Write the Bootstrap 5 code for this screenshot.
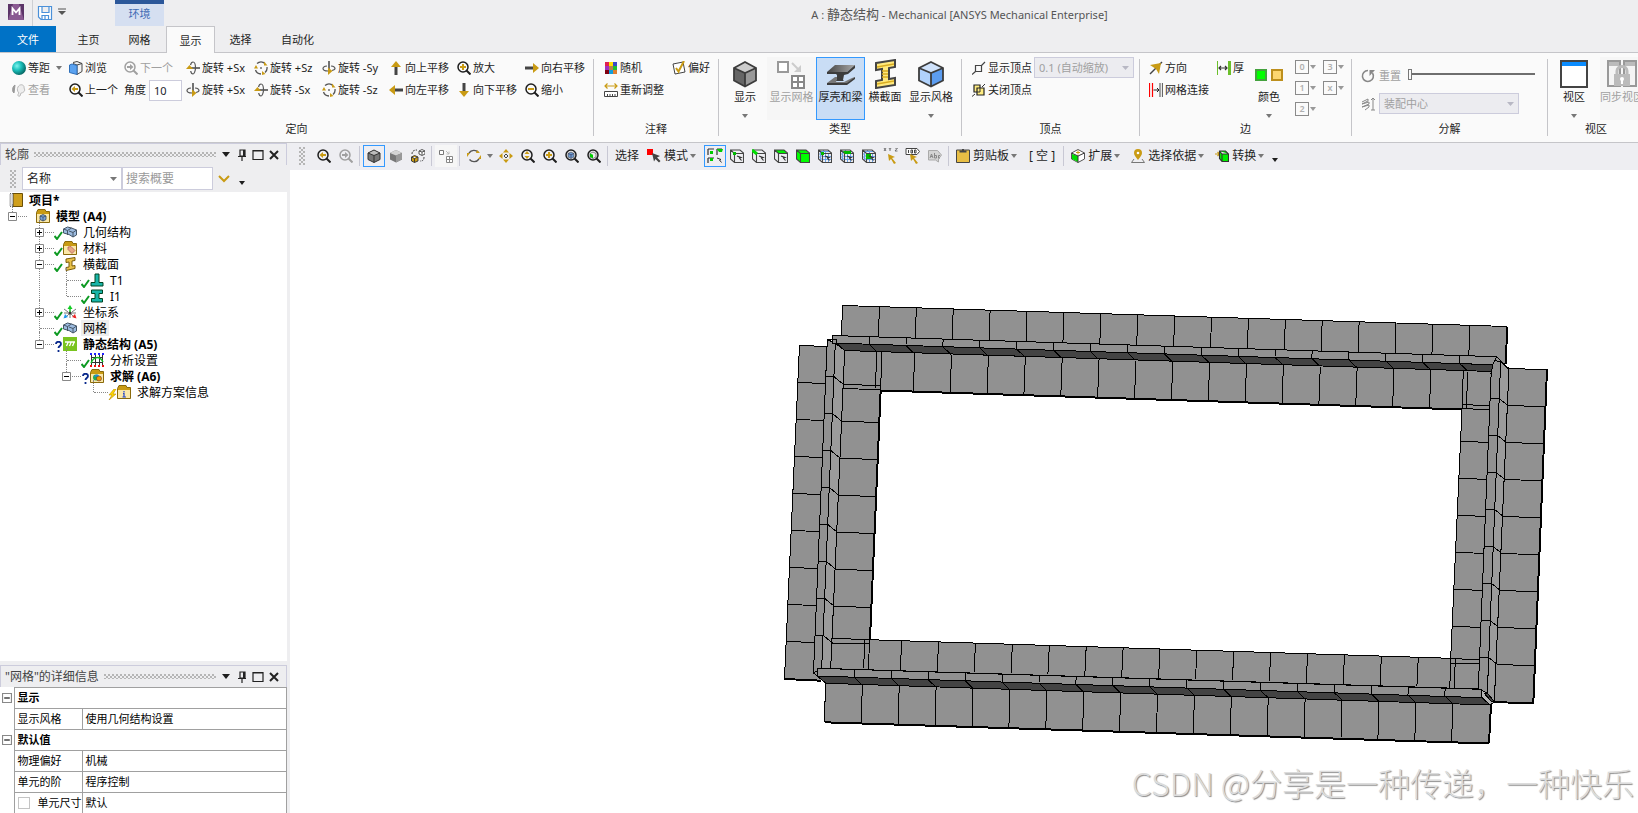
<!DOCTYPE html>
<html lang="zh-CN">
<head>
<meta charset="utf-8">
<meta name="viewport" content="width=device-width, initial-scale=1">
<title>A : 静态结构 - Mechanical [ANSYS Mechanical Enterprise]</title>
<link rel="stylesheet" href="https://cdn.jsdelivr.net/npm/bootstrap@5.3.0/dist/css/bootstrap.min.css">
<style>
:root{--chrome:#eeeef0;--strip:#eeeef2;--line:#c5c5c9;--edge:#ccccdc;--hot:#3399ff;--gold:#c99b14;--ink:#1e1e1e}
body{font-family:"Noto Sans","Noto Sans CJK SC",sans-serif;font-size:11px;line-height:16px;color:var(--ink);background:var(--chrome)}
svg{display:block;flex:none}
.i14{width:14px;height:14px}
.i16{width:16px;height:16px}
.i30{width:30px;height:30px}
.btn{--bs-btn-padding-x:0;--bs-btn-padding-y:0;--bs-btn-font-size:11px;--bs-btn-line-height:16px;--bs-btn-color:var(--ink);--bs-btn-border-radius:0;--bs-btn-border-width:0;--bs-btn-disabled-color:#a0a0a0;--bs-btn-disabled-opacity:1;--bs-btn-disabled-border-color:transparent;white-space:nowrap;text-align:left}
.caret{display:block;width:0;height:0;flex:none;border:3px solid transparent;border-top:4px solid #777;border-bottom:0}
.caret.dark{border-top-color:var(--ink)}
.caret.wide{border-width:5px 4px 0}
/* title and tabs */
.titlebar{height:26px}
.envtab{width:49px;margin-left:48px;border-top:4px solid #2b579a;background:#d5dff1;color:#3f6bb5;line-height:20px}
.caption{color:#555;white-space:nowrap;line-height:20px;padding:4px 0 0 281px}
.caption span{font-size:13px}
.tabs{height:27px;border-bottom:1px solid var(--line)}
.tabs .nav-link{height:26px;padding:0;line-height:27px;color:var(--ink);text-align:center;border:0;border-radius:0;width:51px}
.tabs .nav-link.file{width:56px;background:#0072c6;color:#fff;margin-right:7px}
.tabs .nav-link.active{width:49px;height:27px;background:#fafafa;border:1px solid var(--line);border-bottom:0;margin-left:1px}
.tabs .nav-link.wide{width:63px}
/* ribbon */
.ribbon{height:90px;background:#fafafa;border-bottom:1px solid var(--line)}
.ribbon .vr{background:var(--line);opacity:1;margin:6px 0 7px;align-self:auto;height:77px;flex:none}
.rgroup{padding-top:4px;flex:none}
.rgroup .gbody{height:63px}
.gname{font-size:11px;line-height:18px;text-align:center}
.cells{display:grid;grid-auto-rows:22px;align-content:start}
.cells .btn,.cells .fieldrow{display:flex;align-items:center;gap:2px;height:22px}
.g-orient{grid-template-columns:57px 55px 62px 68px 68px 67px 68px 68px 68px;padding-left:12px}
.g-note{grid-template-columns:68px 46px;padding-left:10px}
.g-vertex{grid-template-columns:62px 104px;padding-left:10px;padding-right:1px}
.g-edge{grid-template-columns:68px 32px;padding-left:9px}
.big{display:flex!important;flex-direction:column;align-items:center;height:63px}
.big .i30{margin-top:2px}
.big .caret{margin-top:9px}
.big.on{background:#c9ddf5;border:1px solid var(--hot)}
.big.on .i30{margin-top:1px}
.big:disabled{background:#f6f6f6}
.w40{width:40px}.w44{width:44px}.w49{width:49px}.w52{width:52px}
.angle{width:33px;height:21px;border:1px solid var(--edge);border-radius:0;padding:2px 4px;font-size:11px;line-height:16px}
.pick{appearance:none;border:1px solid var(--edge);border-radius:0;padding:0 16px 0 4px;font-size:11px;line-height:16px;height:21px;color:#a0a0a0;background-color:#ececf0;background-size:7px 4px;background-position:right 4px center;background-repeat:no-repeat;background-image:url("data:image/svg+xml,%3Csvg xmlns='http://www.w3.org/2000/svg' viewBox='0 0 7 4'%3E%3Cpath d='M0 0h7L3.500 4z' fill='%23b8b8c4'/%3E%3C/svg%3E")}
.pick:disabled{background-color:#ececf0}
.pick.name{background-color:#fff;color:var(--ink);font-size:12px;height:23px;width:100px;background-image:url("data:image/svg+xml,%3Csvg xmlns='http://www.w3.org/2000/svg' viewBox='0 0 7 4'%3E%3Cpath d='M0 0h7L3.500 4z' fill='%23777'/%3E%3C/svg%3E")}
.numgrid{display:grid;grid-template-columns:28px 28px;grid-auto-rows:21px;padding:3px 0 0 6px}
.numgrid .btn{display:flex;align-items:flex-start;gap:1px;font-size:9px}
.numgrid .digit{width:14px;height:14px;border:1px solid #8a8a8a;line-height:12px;text-align:center;font-weight:600;color:#b0b0b0}
.numgrid .caret{margin-top:5px;border-top-color:#999}
.g-explode{padding:8px 28px 0 9px}
.g-explode .exrow{display:flex;align-items:center;gap:4px;height:21px}
.g-explode .exrow+.exrow{margin-top:7px}
.g-explode .pick{width:140px}
.explode{width:127px;height:16px;appearance:none;background:none;margin:0 -16px 4px auto}
.explode::-webkit-slider-runnable-track{height:2px;background:#6e6e6e}
.explode::-webkit-slider-thumb{appearance:none;width:4px;height:11px;margin-top:-4px;border:1px solid #777;background:#fafafa;border-radius:0}
/* side panels */
.side{width:287px;flex:none}
.panehead{height:22px;border:1px solid var(--edge);border-bottom:0;padding-left:4px;font-size:12px;color:#444}
.dots,.grip{background-image:radial-gradient(circle at 1px 1px,#b4b4b4 0 .700px,transparent 1px),radial-gradient(circle at 3px 3px,#b4b4b4 0 .700px,transparent 1px);background-size:4px 4px}
.dots{height:5px;margin:0 2px 0 5px}
.panehead .btn{width:16px;height:18px;display:flex;align-items:center;justify-content:center}
.grip{width:6px;height:18px;flex:none}
.findbar{height:27px}
.find{width:91px;height:23px;border:1px solid var(--edge);border-radius:0;font-size:12px;line-height:16px;padding:2px 3px;min-height:0}
.find::placeholder{color:#9a9a9a}
.treebox{background:#fff;font-size:12px;color:#000}
.treebox ul{list-style:none;margin:0;padding:0}
.treebox ul ul ul{padding-left:27px}
.treebox ul ul li{position:relative}
.treebox ul ul li::before{content:"";position:absolute;left:12px;top:-4px;bottom:0;border-left:1px dotted #888}
.treebox ul ul li:last-child::before{bottom:auto;height:12px}
.node{display:flex;align-items:center;height:16px;white-space:nowrap}
.node .slot{width:27px;height:16px;position:relative;flex:none}
.node .slot::after{content:"";position:absolute;left:13px;right:0;top:8px;border-top:1px dotted #888}
.node .exp{position:absolute;left:8px;top:4px;width:9px;height:9px;z-index:1}
.node .state{width:9px;height:16px;flex:none;display:flex;align-items:flex-end}
.node .txt{margin-left:4px;padding:0 2px;line-height:18px;height:16px}
.node .txt.sel{background:#eee}
.props{background:#fff;color:#000;table-layout:fixed;width:100%;border-collapse:collapse;margin-bottom:-1px}
.props td,.props th{height:21px;border:1px solid #a0a0a0;padding:0 0 0 3px;line-height:18px;font-weight:400;white-space:nowrap;overflow:hidden}
.props .gut{border:0;padding:0 0 0 2px}
.props .sect{font-weight:700}
.props input{appearance:none;width:12px;height:12px;border:1px solid #c4c4c4;border-radius:0;margin:0 8px 0 0;vertical-align:-2px}
/* graphics toolbar */
.gbar{height:27px;background:var(--strip);font-size:12px;padding:0 0 2px 9px}
.gbar .btn{height:22px;min-width:22px;display:flex;align-items:center;justify-content:center;font-size:12px;flex:none}
.gbar .btn.on{border:1px solid var(--hot)}
.gbar .btn.off{background:#f6f6f6}
.gbar .vr{background:#c8c8d4;opacity:1;height:20px;align-self:center;margin:0 3px 0 2px;flex:none}
.gbar .wordy{gap:3px}
.gbar .wordy .caret{margin-left:-1px}
.gbar .apart{margin-right:11px}
.gbar .orbitmenu{margin:0 2px}
.view{background:#fff;position:relative;min-height:0}
.view>svg{width:100%;height:100%}
.wm{position:absolute;right:4px;bottom:9px;font-family:"Noto Sans CJK SC","Noto Sans",sans-serif;font-weight:300;font-size:32px;line-height:44px;color:#dcdcdc;text-shadow:1px 1px 1px #8c8c8c;white-space:nowrap}
</style>
</head>
<body class="vh-100 d-flex flex-column overflow-hidden">

<svg width="0" height="0" class="position-absolute" aria-hidden="true">
<defs>
<radialGradient id="ball" cx=".35" cy=".35" r=".7"><stop offset="0" stop-color="#7ff4ee"/><stop offset=".45" stop-color="#1cc0bb"/><stop offset="1" stop-color="#04625f"/></radialGradient>
<linearGradient id="steel" x1="0" x2="1"><stop offset="0" stop-color="#444"/><stop offset="1" stop-color="#a8a8a8"/></linearGradient>
<symbol id="s-ball" viewBox="0 0 14 14"><circle cx="7" cy="7" r="7" fill="url(#ball)"/></symbol>
<symbol id="s-browse" viewBox="0 0 14 14"><path d="M4 1.500 8 .500l5 2v8L8 13.500V4L4 2.500" fill="#f2f2f2" stroke="#444"/><path d="m8 4 5-1.500" stroke="#444"/><path d="M.500 4 3 3l5 1.500v9L.500 11.500z" fill="#5aa2f0" stroke="#2f6fb8"/></symbol>
<symbol id="s-look" viewBox="0 0 14 14"><path d="M3 2C1 3 0 6 1 9l1 1 1-8" fill="#999" stroke="#999"/><path d="M6 4c2-4 7-2 6 1 2 3-1 5-3 5l-1 3c-2 1-3-1-1-3-2-2-2-4-1-6z" fill="#eee" stroke="#bbb"/></symbol>
<symbol id="s-lens" viewBox="0 0 14 14"><circle cx="6" cy="6" r="5" fill="none" stroke="currentColor" stroke-width="1.500"/><path d="m9.500 9.500 4 4" stroke="currentColor" stroke-width="2"/></symbol>
<symbol id="s-prev" viewBox="0 0 14 14"><use href="#s-lens"/><path d="M2.500 6 6 3v2h3v2H6v2z" fill="#c99b14"/></symbol>
<symbol id="s-next" viewBox="0 0 14 14"><use href="#s-lens"/><path d="M9.500 6 6 3v2H3v2h3v2z" fill="currentColor"/></symbol>
<symbol id="s-zin" viewBox="0 0 14 14"><use href="#s-lens"/><path d="M5 3h2v2h2v2H7v2H5V7H3V5h2z" fill="#c99b14"/></symbol>
<symbol id="s-zout" viewBox="0 0 14 14"><use href="#s-lens"/><path d="M3 5h6v2H3z" fill="#c99b14"/></symbol>
<symbol id="s-zdrag" viewBox="0 0 14 14"><use href="#s-lens"/><path d="m6 2 2.500 3h-5zM6 10 3.500 7h5z" fill="#c99b14"/></symbol>
<symbol id="s-zfit" viewBox="0 0 14 14"><use href="#s-lens"/><path d="M3 4.500 6 3l3 1.500V8L6 9.500 3 8z" fill="#6d9bd2" stroke="#555" stroke-width=".7"/><path d="m3 4.500 3 1.300 3-1.300M6 5.800v3.500" stroke="#335" stroke-width=".6" fill="none"/></symbol>
<symbol id="s-zsel" viewBox="0 0 14 14"><use href="#s-lens"/><path d="M3 4.500 6 3l3 1.500V8L6 9.500 3 8z" fill="#eee" stroke="#555" stroke-width=".7"/><path d="m3 4.500 3 1.300v3.500L3 8z" fill="#0c0"/></symbol>
<symbol id="s-rx" viewBox="0 0 14 14"><path d="M5 7h9" stroke="#444" stroke-width="1.500"/><path d="M4.500 4C5 2 6 1 7 1c1.500 0 2.500 3 2.500 6S8 13 7 13s-2-1-2.300-3" fill="none" stroke="#555" stroke-width="1.200"/><path d="M0 8h7L3.500 4z" fill="#c99b14"/></symbol>
<symbol id="s-ry" viewBox="0 0 14 14"><path d="M7 0v9" stroke="#444" stroke-width="1.500"/><path d="M5 5C2 5.300 1 6.500 1 7.500 1 9 3.500 10 6 10m4-.500c2-.500 3-1 3-2C13 6 11 5.200 9 5" fill="none" stroke="#555" stroke-width="1.200"/><path d="M6 6.500V14l4.500-4z" fill="#c99b14"/></symbol>
<symbol id="s-rz" viewBox="0 0 14 14"><path d="M3 2.500a6 6 0 0 1 8 0M13 6a6 6 0 0 1-2 5.500M7 13a6 6 0 0 1-5.500-4" fill="none" stroke="#555" stroke-width="1.300"/><path d="M6.300 6.300h1.400v1.400H6.300z" fill="#333"/><path d="M0 7.500h4L2 4zM10 .500v4h3.500zM8 10v4l3.500-1z" fill="#c99b14"/></symbol>
<symbol id="s-up" viewBox="0 0 14 14"><path d="M5.500 5h3v9h-3z" fill="#444"/><path d="M7 0 2 6h10z" fill="#c99b14"/></symbol>
<symbol id="s-down" viewBox="0 0 14 14"><path d="M5.500 0h3v9h-3z" fill="#444"/><path d="m7 14 5-6H2z" fill="#c99b14"/></symbol>
<symbol id="s-left" viewBox="0 0 14 14"><path d="M5 5.500h9v3H5z" fill="#444"/><path d="m0 7 6-5v10z" fill="#c99b14"/></symbol>
<symbol id="s-right" viewBox="0 0 14 14"><path d="M0 5.500h9v3H0z" fill="#444"/><path d="M14 7 8 2v10z" fill="#c99b14"/></symbol>
<symbol id="s-rand" viewBox="0 0 14 14"><path d="M1 1h4v4H1z" fill="#e02050"/><path d="M5 1h4v4H5z" fill="#ffe000"/><path d="M9 1h4v4H9z" fill="#3a49c8"/><path d="M1 5h4v4H1z" fill="#a030c0"/><path d="M5 5h4v4H5z" fill="#b98050"/><path d="M9 5h4v4H9z" fill="#20c030"/><path d="M1 9h4v4H1z" fill="#800010"/><path d="M5 9h4v4H5z" fill="#10a0e0"/><path d="M9 9h4v4H9z" fill="#e08030"/></symbol>
<symbol id="s-scale" viewBox="0 0 14 14"><path d="M1 3h12M3.500.500 1 3l2.500 2.500M10.500.500 13 3l-2.500 2.500" stroke="#c99b14" fill="none" stroke-width="1.200"/><path d="M.500 8.500h13v5H.500zM3.500 13v-2M6 13v-2M8.500 13v-2M11 13v-2" fill="#fff" stroke="#444"/></symbol>
<symbol id="s-pref" viewBox="0 0 14 14"><path d="M1 3 11 1l2 10-10 2z" fill="#fff" stroke="#444"/><path d="m4 7 2.500 3.500L12 0" fill="none" stroke="#c99b14" stroke-width="2"/></symbol>
<symbol id="s-cube" viewBox="0 0 30 30"><path d="m15 3 11 6v12.500L15 27.500l-11-6V9z" fill="#666"/><path d="m15 3 11 6-11 5L4 9z" fill="#ccc"/><path d="m15 14 11-5v12.500l-11 6z" fill="#999"/><path d="m15 3 11 6v12.500L15 27.500l-11-6V9zM4 9l11 5 11-5M15 14v13.500" fill="none" stroke="#3c3c3c" stroke-width="1.800"/></symbol>
<symbol id="s-cubeb" viewBox="0 0 30 30"><path d="m15 3 12 6v12.500L15 27.500l-12-6V9z" fill="#b0d2fc"/><path d="m15 3 12 6-12 5L3 9z" fill="#cfe2fb"/><path d="m15 14 12-5v12.500l-12 6z" fill="#5c9df0"/><path d="m15 3 12 6v12.500L15 27.500l-12-6V9zM3 9l12 5 12-5M15 14v13.500" fill="none" stroke="#3c3c3c" stroke-width="1.800"/></symbol>
<symbol id="s-mesh" viewBox="0 0 30 30"><path d="M1 3h10v10H1z" fill="#fff" stroke="#999" stroke-width="2"/><path d="m15 4 6 6" stroke="#ccc" stroke-width="2"/><path d="M24 13V6l-7 7z" fill="#ccc"/><path d="M15 17h12v12H15zM21 17v12M15 23h12" fill="#fff" stroke="#888" stroke-width="2"/></symbol>
<symbol id="s-beam" viewBox="0 0 30 30"><path d="m1 13 8-7h20l-8 7z" fill="url(#steel)"/><path d="M1 13h20l8-7v3l-7 6-4 1-1 5 1 1H9l2-2V16l-1-1H1z" fill="#3d3d3d"/><path d="m1 24 8-6h2v2l-1 3h8l8-4 3-1-8 7z" fill="#777"/><path d="M1 24h20l8-6v2l-8 6H1z" fill="#3d3d3d"/></symbol>
<symbol id="s-ibeam" viewBox="0 0 30 30"><path d="m6 4 19-3v7l-6 1v11l6-1v7l-19 3v-7l6-1V10l-6 1z" fill="#ffe97d" stroke="#444" stroke-width="2"/><path d="m7 8 17-3M12 12h6M12 15h6M12 18h6M7 25l17-3" stroke="#d9ac20" stroke-width="1.500" fill="none"/></symbol>
<symbol id="s-vshow" viewBox="0 0 14 14"><path d="M3.500 4.500h6v6h-6zM0 13.500l3.500-3M9.500 4.500 13 1" fill="none" stroke="#444" stroke-width="1.200"/></symbol>
<symbol id="s-vhide" viewBox="0 0 14 14"><path d="M2 2h6v7H2z" fill="#ffec80" stroke="#222" stroke-width="1.200"/><path d="M5 5h7v7H5z" fill="#ffec80" stroke="#222" stroke-width="1.200"/><path d="M8 5v4H5M0 13.500 3 11M10 4l3-3" fill="none" stroke="#333"/></symbol>
<symbol id="s-dir" viewBox="0 0 14 14"><path d="m1 13 12-12" stroke="#444" stroke-width="1.500"/><path d="M1 4 12 2l-2 11-3-5z" fill="#c99b14"/></symbol>
<symbol id="s-conn" viewBox="0 0 14 14"><path d="M.500 0v14M3.500 0v14" stroke="#f00" stroke-width="1.200"/><path d="M11 0v14M13.500 0v14" stroke="#666" stroke-width="1.200"/><path d="M4.500 7H10M8 5l2 2-2 2" fill="none" stroke="#222"/></symbol>
<symbol id="s-thick" viewBox="0 0 14 14"><path d="M.500 0v14" stroke="#6bbf2a"/><path d="M12.500 0v14" stroke="#6bbf2a" stroke-width="3"/><path d="M2 7h8M4 5 2 7l2 2M8 5l2 2-2 2" fill="none" stroke="#333" stroke-width="1.200"/></symbol>
<symbol id="s-color" viewBox="0 0 30 30"><path d="M2 11h10v10H2z" fill="#0f0" stroke="#44a23e" stroke-width="2"/><path d="M18 11h10v10H18z" fill="#fcd670" stroke="#bd8f1c" stroke-width="2"/></symbol>
<symbol id="s-reset" viewBox="0 0 14 14"><path d="M7 1.500A5.500 5.500 0 1 0 11.500 4" fill="none" stroke="#888" stroke-width="1.600"/><path d="M8.500 1H14L8.500 7z" fill="#888"/></symbol>
<symbol id="s-coil" viewBox="0 0 14 14"><path d="m1 5 6-3v2L1 7l7-2v2l-7 3 7-2v2l-4 3M12 1v12M10 3l2-2 2 2M10 13h4" fill="none" stroke="#888"/></symbol>
<symbol id="s-win" viewBox="0 0 30 30"><path d="M2 2h26v26H2z" fill="#fff" stroke="#444" stroke-width="2"/><path d="M3 3h24v4H3z" fill="#0a8cff"/></symbol>
<symbol id="s-lock" viewBox="0 0 30 30"><path d="M1 2h12v25H1zM17 2h12v25H17z" fill="#f4f4f4" stroke="#999" stroke-width="2"/><path d="M2 3h10v4H2zM18 3h10v4H18z" fill="#bbb"/><path d="M10 16v-4c0-6 10-6 10 0v4" fill="none" stroke="#bbb" stroke-width="3"/><path d="M7 15h16v12H7z" fill="#bbb"/><circle cx="15" cy="20" r="2" fill="#fff"/><path d="M14 20h2v5h-2z" fill="#fff"/></symbol>
<symbol id="s-cubes" viewBox="0 0 14 14"><path d="m7 1 6 3v6.500L7 13.500l-6-3V4z" fill="#777"/><path d="m7 1 6 3-6 2.500L1 4z" fill="#bbb"/><path d="m7 1 6 3v6.500L7 13.500l-6-3V4zM1 4l6 2.500L13 4M7 6.500v7" fill="none" stroke="#333"/></symbol>
<symbol id="s-cubep" viewBox="0 0 14 14"><path d="m7 1 6 3v6.500L7 13.500l-6-3V4z" fill="#777"/><path d="m7 1 6 3-6 2.500L1 4z" fill="#d4d4d4"/><path d="m7 6.500 6-2.500v6.500l-6 3z" fill="#999"/></symbol>
<symbol id="s-swap" viewBox="0 0 14 14"><path d="m8 2 3-1.500 3 1.500v3l-3 1.500L8 5zM8 2l3 1 3-1M11 3v3" fill="#fff" stroke="#444" stroke-width=".9"/><path d="m.500 8 3-1.500L7 8v4l-3.500 1.500-3-1.500zM.500 8l3 1.500L7 8M3.500 9.500v4" fill="#c99b14" stroke="#333" stroke-width=".9"/><path d="M1 5c0-3 2-4 5-4M13 8c0 3-1 4-4 4" fill="none" stroke="#444" stroke-dasharray="2 1"/></symbol>
<symbol id="s-meshs" viewBox="0 0 14 14"><path d="M.500 1.500h4v4h-4z" fill="#fff" stroke="#777"/><path d="m7 2 3 3M7.500 5H10V2.500" stroke="#bbb" fill="none"/><path d="M7.500 7.500h6v6h-6zM10.500 7.500v6M7.500 10.500h6" fill="#fff" stroke="#888"/></symbol>
<symbol id="s-orbit" viewBox="0 0 14 14"><path d="M2 4a6 6 0 0 1 9.500-.500M12 10a6 6 0 0 1-9.500.500" fill="none" stroke="#555" stroke-width="1.400"/><path d="M0 8V4h3zM14 6v4h-3zM10 1l3 3h-4z" fill="#c99b14"/></symbol>
<symbol id="s-pan" viewBox="0 0 14 14"><path d="m7 0 3 3.500H4zM7 14l3-3.500H4zM0 7l3.500-3v6zM14 7l-3.500-3v6z" fill="#c99b14"/><path d="M6 5h2v1H6zM6 8h2v1H6zM5 6h1v2H5zM8 6h1v2H8z" fill="#444"/></symbol>
<symbol id="s-arrow" viewBox="0 0 14 14"><path d="M0 0h6v6H0z" fill="red"/><path d="m5 4 8 3-3 1.500L13.500 12 12 13.500 8.500 10 7 12.500z" fill="#444"/></symbol>
<symbol id="s-f4" viewBox="0 0 16 16"><path d="M1 1h6M1 1v6M10 1h5M10 1v6M1 10h6M1 10v5" stroke="#333" stroke-width="1.200" fill="none"/><path d="M3 3h3v3H3zM10 1h6l-1 3h-3zM3 10h3v3H3z" fill="#0c0"/><path d="m10 10 4 1.500-1.500.500 2 2.500" stroke="#333" fill="none"/></symbol>
<symbol id="s-box" viewBox="0 0 14 14"><path d="m.500 1 9.500 0 3.500 3v9.500h-9L.500 10zM.500 1l4 3.500h9M4.500 4.500v9" fill="none" stroke="#444" stroke-width="1.100"/></symbol>
<symbol id="s-cur" viewBox="0 0 14 14"><path d="m7 7 4 1.500-1.500.500 2 2.500" stroke="#333" stroke-width="1.200" fill="none"/></symbol>
<symbol id="s-bv" viewBox="0 0 14 14"><use href="#s-box"/><use href="#s-cur"/><path d="M3 3h3v3H3z" fill="#0b0"/></symbol>
<symbol id="s-be" viewBox="0 0 14 14"><use href="#s-box"/><use href="#s-cur"/><path d="m0 1 5 4" stroke="#0d0" stroke-width="3"/></symbol>
<symbol id="s-bf" viewBox="0 0 14 14"><path d="M.500 1H10l3.500 3.500h-9z" fill="#0e0"/><use href="#s-box"/><use href="#s-cur"/></symbol>
<symbol id="s-bb" viewBox="0 0 14 14"><path d="M.500 1H10l3.500 3.500v9h-9L.500 10z" fill="#0f0"/><use href="#s-box"/></symbol>
<symbol id="s-grid" viewBox="0 0 14 14"><path d="M7.500 4v9M10.500 4v9M4 7.500h9M4 10.500h9M2.500 3v8M.500 4l4 4M.500 7l4 4M5 1l3 3M3 2.500h8" stroke="#5d9be8" fill="none" stroke-width=".9"/><use href="#s-box"/></symbol>
<symbol id="s-gn" viewBox="0 0 14 14"><use href="#s-grid"/><path d="M3 3h3v3H3z" fill="#0b0"/><use href="#s-cur"/></symbol>
<symbol id="s-gf" viewBox="0 0 14 14"><use href="#s-grid"/><path d="M3 2h8v3H5z" fill="#0b0"/><use href="#s-cur"/></symbol>
<symbol id="s-ge" viewBox="0 0 14 14"><use href="#s-grid"/><path d="M4 5h5v5H4z" fill="#0b0"/><use href="#s-cur"/></symbol>
<symbol id="s-gold" viewBox="0 0 16 16"><path d="m5 6 7 3-3 1 4 5-2 1-3-5-2 2z" fill="#c99b14"/></symbol>
<symbol id="s-xyz" viewBox="0 0 16 16"><path d="m1 0 2 3m0-3L1 3M6 0l1 1.500L8 0M7 1.500V3M12 0h2.500L12 3h2.500" stroke="#555" stroke-width=".8" fill="none"/><use href="#s-gold"/></symbol>
<symbol id="s-100" viewBox="0 0 16 16"><path d="M1 .500h11l2.500 3-2.500 3H1z" fill="#fff" stroke="#444"/><path d="M3.500 2v3M6 2h1.500v3H6zM9.500 2H11v3H9.500z" fill="none" stroke="#444"/><use href="#s-gold"/></symbol>
<symbol id="s-abc" viewBox="0 0 14 14"><path d="M.500 1.500h9l4 4.500-3 4v3l-3-2h-7z" fill="#d4d4d4" stroke="#aaa"/><path d="m2 9 1.500-4L5 9M2.500 7.500h2M6.500 4v5h2V6.500h-2M12 6.500h-1.500V9H12" fill="none" stroke="#888"/></symbol>
<symbol id="s-clip" viewBox="0 0 14 14"><path d="M.500 1h13v12.500H.500z" fill="#e8be45" stroke="#444"/><path d="M6 0h2v1.500h2.500v2h-7v-2H6z" fill="#444"/></symbol>
<symbol id="s-ext" viewBox="0 0 14 14"><path d="m7 .500 6.500 3.500v6L7 13.500.500 10V4z" fill="#fff" stroke="#555"/><path d="m1 5 6 2v6L1 10z" fill="#0d0"/><path d="m.500 4 6.500 3 6.500-3M7 7v6.500" stroke="#333" fill="none"/><path d="M7 1.500v4M5 3.500h4" stroke="#c99b14"/></symbol>
<symbol id="s-pin" viewBox="0 0 14 14"><path d="M3 10 .500 13.500h13L11 10" fill="none" stroke="#777"/><path d="M7 11C4.500 7.500 3 6 3 4a4 4 0 0 1 8 0c0 2-1.500 3.500-4 7z" fill="#c99b14"/><circle cx="7" cy="4" r="1.300" fill="#fff"/></symbol>
<symbol id="s-conv" viewBox="0 0 14 14"><path d="M0 5h4M2.500 3l2 2-2 2" stroke="#c99b14" fill="none" stroke-width="1.200"/><path d="M4.500 2h6l3 3v7.500H7l-2.500-3zM4.500 2 7 5h6.500M7 5v7" fill="#0e0" stroke="#333" stroke-width="1.100"/></symbol>
<symbol id="s-tack" viewBox="0 0 12 12"><path d="M4 1h5v6H4zM2 7.500h8M6 8v4" fill="none" stroke="#222" stroke-width="1.200"/><path d="M7 1h2v6H7z" fill="#222"/></symbol>
<symbol id="s-max" viewBox="0 0 12 12"><path d="M1 1.500h10v9H1zM1 2h10" fill="none" stroke="#222" stroke-width="1.200"/></symbol>
<symbol id="s-x" viewBox="0 0 12 12"><path d="m2 2 8 8m0-8-8 8" stroke="#222" stroke-width="2"/></symbol>
<symbol id="s-ok" viewBox="0 0 9 9"><path d="m.500 5 2.500 3 5-7" fill="none" stroke="#0d9a22" stroke-width="2"/></symbol>
<symbol id="s-bolt" viewBox="0 0 9 11"><path d="M6 0 1 6h3L1 11l7-6H5l3-5z" fill="#ffd800" stroke="#b98a00" stroke-width=".6"/></symbol>
<symbol id="s-minus" viewBox="0 0 9 9"><path d="M.500.500h8v8h-8z" fill="#fff" stroke="#888"/><path d="M2 4.500h5" stroke="#000"/></symbol>
<symbol id="s-plus" viewBox="0 0 9 9"><path d="M.500.500h8v8h-8z" fill="#fff" stroke="#888"/><path d="M2 4.500h5M4.500 2v5" stroke="#000"/></symbol>
<symbol id="s-book" viewBox="0 0 14 14"><path d="M4 .500h9.500v13H4z" fill="#cf9f1c" stroke="#6b4f06"/><path d="M1 .500h3v13H1z" fill="#ddd" stroke="#666" stroke-dasharray="1 1"/></symbol>
<symbol id="s-fold" viewBox="0 0 14 14"><path d="M.500 3.500 2 .500h7l1 2h3.500v11H.500z" fill="#c99b14" stroke="#8a6a0c"/><path d="M1 5h12v8H1z" fill="#fbe8a8"/></symbol>
<symbol id="s-model" viewBox="0 0 14 14"><use href="#s-fold"/><path d="m4 7 3-1.500L10 7v3.500L7 12l-3-1.500z" fill="#7ba5dd" stroke="#345" stroke-width=".8"/><path d="m4 7 3 1.200L10 7M7 8.200V12" stroke="#345" stroke-width=".7" fill="none"/></symbol>
<symbol id="s-geo" viewBox="0 0 14 14"><path d="m.500 4 4-2 4 1 5 2v5l-3.500 2-4-2.500L.500 8z" fill="#9cbbe0" stroke="#456" /><path d="m.500 4 4 1.500 4-2.500M4.500 5.500V10M6 6l4 1.500L13.500 5M10 7.500V12" fill="none" stroke="#456"/></symbol>
<symbol id="s-mat" viewBox="0 0 14 14"><use href="#s-fold"/><path d="m5 6 3-.500 4 4-3 3-4-4z" fill="#e7a884" stroke="#a55" stroke-width=".7"/></symbol>
<symbol id="s-sec" viewBox="0 0 14 14"><path d="m3 2 9-1.500v3l-3 .500v5l3-.500v3L3 13.500v-3L6 10V5l-3 .500z" fill="#e9c24a" stroke="#7a5b08"/></symbol>
<symbol id="s-t1" viewBox="0 0 14 14"><path d="M5 1h4v8.500h4v3.500H1V9.500h4z" fill="#18b5a9" stroke="#042" /></symbol>
<symbol id="s-i1" viewBox="0 0 14 14"><path d="M1.500 1h11v3.500H9v5h3.500V13h-11V9.500H5v-5H1.500z" fill="#18b5a9" stroke="#042"/></symbol>
<symbol id="s-cs" viewBox="0 0 14 14"><path d="m7 8-5 5M7 8l5 5" stroke="#888"/><path d="M7 0 4.500 4h5z" fill="#1c2"/><path d="M7 4v3" stroke="#1c2" stroke-width="1.500"/><path d="M13.500 13.500 12 9l-3 3z" fill="#e22"/><path d="M.500 13.500 2 9l3 3z" fill="#29e"/><path d="m1 4 4 3M13 4 9 7M7 9v4M1 8h12" stroke="#777"/><circle cx="7" cy="8" r="1.500" fill="#333"/></symbol>
<symbol id="s-static" viewBox="0 0 14 14"><path d="M0 0h14v14H0z" fill="#79c41f"/><path d="M2 5h10M5 5.500 3.500 9M8 5.500 6.500 9M11 5.500 9.500 9" stroke="#fff" stroke-width="1.300"/></symbol>
<symbol id="s-set" viewBox="0 0 14 14"><path d="M1.500 2v11M5.500 2v11M9.500 2v11M12.500 2v11M1 9.500h12M1 4.500h12" stroke="#333"/><path d="M0 1h2M4 1h2M8 1h2M12 1h2" stroke="#22f" stroke-width="2"/><path d="M0 13h2M4 13h2M8 13h2M12 13h2" stroke="#e11" stroke-width="2"/><path d="M1 10C4 3 10 3 13 9" fill="none" stroke="#1b2" stroke-width="1.500"/></symbol>
<symbol id="s-sol" viewBox="0 0 14 14"><use href="#s-fold"/><circle cx="6" cy="8.500" r="3" fill="#2a5"/><circle cx="9" cy="9.500" r="2.500" fill="#e90" stroke="#633" stroke-width=".6"/><path d="M4 8c1-3 4-3 5-1z" fill="#28d"/></symbol>
<symbol id="s-info" viewBox="0 0 14 14"><use href="#s-fold"/><path d="M7 6v1.500M6 8.500h1V12M5.500 12h3.500" stroke="#24c" fill="none" stroke-width="1.200"/></symbol>
</defs>
</svg>

<header class="titlebar d-flex position-relative flex-shrink-0">
  <svg class="i16 mt-1 ms-2 flex-shrink-0" viewBox="0 0 16 16" aria-label="M"><path d="M0 0h16v16H0z" fill="#5b3468"/><path d="m0 16 5-16h6l5 16z" fill="#8a5a92"/><path d="M4.500 11V4.500L8 8.500l3.500-4V11" fill="none" stroke="#fff" stroke-width="1.800"/></svg>
  <div class="vr ms-2 bg-secondary opacity-25"></div>
  <button class="btn ms-1" aria-label="保存"><svg class="i16" viewBox="0 0 16 16"><path d="M1.500 1.500h13v13H4L1.500 12zM5 1.500v6h7v-6M5 14.500v-4h6.500v4M8 11v3" fill="#fff" stroke="#4a90d9" stroke-width="1.200"/></svg></button>
  <button class="btn ms-1" aria-label="自定义工具栏"><svg width="10" height="12" viewBox="0 0 10 12"><path d="M1 2h8" stroke="#555"/><path d="M1 4h8L5 8z" fill="#555"/></svg></button>
  <div class="envtab text-center">环境</div>
  <div class="caption position-absolute top-0 start-0 w-100 text-center pe-none">A : <span>静态结构</span> - Mechanical [ANSYS Mechanical Enterprise]</div>
</header>

<nav class="tabs nav flex-nowrap flex-shrink-0">
  <a class="nav-link file" href="#">文件</a>
  <a class="nav-link" href="#">主页</a>
  <a class="nav-link" href="#">网格</a>
  <a class="nav-link active" href="#">显示</a>
  <a class="nav-link" href="#">选择</a>
  <a class="nav-link wide" href="#">自动化</a>
</nav>

<section class="ribbon d-flex flex-shrink-0 overflow-hidden">
  <div class="rgroup">
    <div class="gbody cells g-orient">
      <button class="btn"><svg class="i14"><use href="#s-ball"/></svg>等距<span class="caret ms-1"></span></button>
      <button class="btn"><svg class="i14"><use href="#s-browse"/></svg>浏览</button>
      <button class="btn" disabled><svg class="i14"><use href="#s-next"/></svg>下一个</button>
      <button class="btn"><svg class="i14"><use href="#s-rx"/></svg>旋转 +Sx</button>
      <button class="btn"><svg class="i14"><use href="#s-rz"/></svg>旋转 +Sz</button>
      <button class="btn"><svg class="i14"><use href="#s-ry"/></svg>旋转 -Sy</button>
      <button class="btn"><svg class="i14"><use href="#s-up"/></svg>向上平移</button>
      <button class="btn"><svg class="i14"><use href="#s-zin"/></svg>放大</button>
      <button class="btn"><svg class="i14"><use href="#s-right"/></svg>向右平移</button>
      <button class="btn" disabled><svg class="i14"><use href="#s-look"/></svg>查看</button>
      <button class="btn"><svg class="i14"><use href="#s-prev"/></svg>上一个</button>
      <div class="fieldrow"><label for="angle">角度</label><input id="angle" class="form-control angle ms-auto me-1" value="10"></div>
      <button class="btn"><svg class="i14"><use href="#s-ry"/></svg>旋转 +Sx</button>
      <button class="btn"><svg class="i14"><use href="#s-rx"/></svg>旋转 -Sx</button>
      <button class="btn"><svg class="i14"><use href="#s-rz"/></svg>旋转 -Sz</button>
      <button class="btn"><svg class="i14"><use href="#s-left"/></svg>向左平移</button>
      <button class="btn"><svg class="i14"><use href="#s-down"/></svg>向下平移</button>
      <button class="btn"><svg class="i14"><use href="#s-zout"/></svg>缩小</button>
    </div>
    <div class="gname">定向</div>
  </div>
  <div class="vr"></div>
  <div class="rgroup">
    <div class="gbody cells g-note">
      <button class="btn"><svg class="i14"><use href="#s-rand"/></svg>随机</button>
      <button class="btn"><svg class="i14"><use href="#s-pref"/></svg>偏好</button>
      <button class="btn"><svg class="i14"><use href="#s-scale"/></svg>重新调整</button>
    </div>
    <div class="gname">注释</div>
  </div>
  <div class="vr"></div>
  <div class="rgroup">
    <div class="gbody d-flex ps-1 pe-1">
      <button class="btn big w44"><svg class="i30"><use href="#s-cube"/></svg>显示<span class="caret"></span></button>
      <button class="btn big w49" disabled><svg class="i30"><use href="#s-mesh"/></svg>显示网格</button>
      <button class="btn big w49 on"><svg class="i30"><use href="#s-beam"/></svg>厚壳和梁</button>
      <button class="btn big w40"><svg class="i30"><use href="#s-ibeam"/></svg>横截面</button>
      <button class="btn big w52"><svg class="i30"><use href="#s-cubeb"/></svg>显示风格<span class="caret"></span></button>
    </div>
    <div class="gname">类型</div>
  </div>
  <div class="vr"></div>
  <div class="rgroup">
    <div class="gbody cells g-vertex">
      <button class="btn"><svg class="i14"><use href="#s-vshow"/></svg>显示顶点</button>
      <select class="pick me-1" disabled aria-label="顶点大小"><option>0.1 (自动缩放)</option></select>
      <button class="btn"><svg class="i14"><use href="#s-vhide"/></svg>关闭顶点</button>
    </div>
    <div class="gname">顶点</div>
  </div>
  <div class="vr"></div>
  <div class="rgroup">
    <div class="gbody d-flex">
      <div class="cells g-edge">
        <button class="btn"><svg class="i14"><use href="#s-dir"/></svg>方向</button>
        <button class="btn"><svg class="i14"><use href="#s-thick"/></svg>厚</button>
        <button class="btn"><svg class="i14"><use href="#s-conn"/></svg>网格连接</button>
      </div>
      <button class="btn big w40"><svg class="i30"><use href="#s-color"/></svg>颜色<span class="caret"></span></button>
      <div class="numgrid">
        <button class="btn" disabled><span class="digit">0</span><span class="caret"></span></button>
        <button class="btn" disabled><span class="digit">3</span><span class="caret"></span></button>
        <button class="btn" disabled><span class="digit">1</span><span class="caret"></span></button>
        <button class="btn" disabled><span class="digit">x</span><span class="caret"></span></button>
        <button class="btn" disabled><span class="digit">2</span><span class="caret"></span></button>
      </div>
    </div>
    <div class="gname">边</div>
  </div>
  <div class="vr"></div>
  <div class="rgroup">
    <div class="gbody g-explode">
      <div class="exrow">
        <button class="btn d-flex align-items-center" disabled><svg class="i14 me-1"><use href="#s-reset"/></svg>重置</button>
        <input type="range" class="explode" value="0" aria-label="分解距离">
      </div>
      <div class="exrow">
        <svg class="i14"><use href="#s-coil"/></svg>
        <select class="pick" disabled aria-label="分解中心"><option>装配中心</option></select>
      </div>
    </div>
    <div class="gname">分解</div>
  </div>
  <div class="vr"></div>
  <div class="rgroup">
    <div class="gbody d-flex">
      <button class="btn big w52"><svg class="i30"><use href="#s-win"/></svg>视区<span class="caret"></span></button>
      <button class="btn big w44" disabled><svg class="i30"><use href="#s-lock"/></svg>同步视区</button>
    </div>
    <div class="gname">视区</div>
  </div>
</section>

<main class="d-flex flex-grow-1" style="min-height:0">
  <aside class="side d-flex flex-column">
    <div class="panehead d-flex align-items-center flex-shrink-0">轮廓<div class="dots flex-grow-1"></div>
      <button class="btn" aria-label="菜单"><span class="caret dark wide"></span></button>
      <button class="btn" aria-label="固定"><svg width="12" height="12"><use href="#s-tack"/></svg></button>
      <button class="btn" aria-label="最大化"><svg width="12" height="12"><use href="#s-max"/></svg></button>
      <button class="btn me-1" aria-label="关闭"><svg width="12" height="12"><use href="#s-x"/></svg></button>
    </div>
    <div class="findbar d-flex align-items-center flex-shrink-0">
      <div class="grip" style="margin:0 6px 0 10px"></div>
      <select class="pick name" aria-label="筛选字段"><option>名称</option></select>
      <input class="form-control find" placeholder="搜索概要" aria-label="搜索概要">
      <button class="btn ms-1" aria-label="展开"><svg width="14" height="14" viewBox="0 0 14 14"><path d="m2 4 5 5 5-5" fill="none" stroke="#c99b14" stroke-width="2"/></svg></button>
      <span class="caret dark ms-2 mt-2"></span>
    </div>
    <div class="treebox flex-grow-1 overflow-hidden">
      <ul>
        <li><div class="node fw-bold"><span class="state"></span><svg class="i14"><use href="#s-book"/></svg><span class="txt">项目*</span></div>
          <ul><li><div class="node fw-bold"><span class="slot"><svg class="exp"><use href="#s-minus"/></svg></span><span class="state"></span><svg class="i14"><use href="#s-model"/></svg><span class="txt">模型 (A4)</span></div>
            <ul>
              <li><div class="node"><span class="slot"><svg class="exp"><use href="#s-plus"/></svg></span><span class="state"><svg width="9" height="9"><use href="#s-ok"/></svg></span><svg class="i14"><use href="#s-geo"/></svg><span class="txt">几何结构</span></div></li>
              <li><div class="node"><span class="slot"><svg class="exp"><use href="#s-plus"/></svg></span><span class="state"><svg width="9" height="9"><use href="#s-ok"/></svg></span><svg class="i14"><use href="#s-mat"/></svg><span class="txt">材料</span></div></li>
              <li><div class="node"><span class="slot"><svg class="exp"><use href="#s-minus"/></svg></span><span class="state"><svg width="9" height="9"><use href="#s-ok"/></svg></span><svg class="i14"><use href="#s-sec"/></svg><span class="txt">横截面</span></div>
                <ul>
                  <li><div class="node"><span class="slot"></span><span class="state"><svg width="9" height="9"><use href="#s-ok"/></svg></span><svg class="i14"><use href="#s-t1"/></svg><span class="txt">T1</span></div></li>
                  <li><div class="node"><span class="slot"></span><span class="state"><svg width="9" height="9"><use href="#s-ok"/></svg></span><svg class="i14"><use href="#s-i1"/></svg><span class="txt">I1</span></div></li>
                </ul></li>
              <li><div class="node"><span class="slot"><svg class="exp"><use href="#s-plus"/></svg></span><span class="state"><svg width="9" height="9"><use href="#s-ok"/></svg></span><svg class="i14"><use href="#s-cs"/></svg><span class="txt">坐标系</span></div></li>
              <li><div class="node"><span class="slot"></span><span class="state"><svg width="9" height="9"><use href="#s-ok"/></svg></span><svg class="i14"><use href="#s-geo"/></svg><span class="txt sel">网格</span></div></li>
              <li><div class="node fw-bold"><span class="slot"><svg class="exp"><use href="#s-minus"/></svg></span><span class="state"><svg width="9" height="11" viewBox="0 0 9 11"><path d="M2 3c0-3 5-3 5 0 0 2-2.500 2-2.500 4M4.500 9v2" fill="none" stroke="#0a2a8c" stroke-width="1.800"/></svg></span><svg class="i14"><use href="#s-static"/></svg><span class="txt">静态结构 (A5)</span></div>
                <ul>
                  <li><div class="node"><span class="slot"></span><span class="state"><svg width="9" height="9"><use href="#s-ok"/></svg></span><svg class="i14"><use href="#s-set"/></svg><span class="txt">分析设置</span></div></li>
                  <li><div class="node fw-bold"><span class="slot"><svg class="exp"><use href="#s-minus"/></svg></span><span class="state"><svg width="9" height="11" viewBox="0 0 9 11"><path d="M2 3c0-3 5-3 5 0 0 2-2.500 2-2.500 4M4.500 9v2" fill="none" stroke="#0a2a8c" stroke-width="1.800"/></svg></span><svg class="i14"><use href="#s-sol"/></svg><span class="txt">求解 (A6)</span></div>
                    <ul><li><div class="node"><span class="slot"></span><span class="state"><svg width="9" height="11"><use href="#s-bolt"/></svg></span><svg class="i14"><use href="#s-info"/></svg><span class="txt">求解方案信息</span></div></li></ul>
                  </li>
                </ul></li>
            </ul></li></ul>
        </li>
      </ul>
    </div>
    <div class="panehead d-flex align-items-center flex-shrink-0 mt-1">"网格"的详细信息<div class="dots flex-grow-1"></div>
      <button class="btn" aria-label="菜单"><span class="caret dark wide"></span></button>
      <button class="btn" aria-label="固定"><svg width="12" height="12"><use href="#s-tack"/></svg></button>
      <button class="btn" aria-label="最大化"><svg width="12" height="12"><use href="#s-max"/></svg></button>
      <button class="btn me-1" aria-label="关闭"><svg width="12" height="12"><use href="#s-x"/></svg></button>
    </div>
    <table class="props flex-shrink-0">
      <colgroup><col style="width:14px"><col style="width:68px"><col></colgroup>
      <tbody>
      <tr><td class="gut"><svg width="10" height="10"><use href="#s-minus"/></svg></td><th class="sect" colspan="2">显示</th></tr>
      <tr><td class="gut"></td><th>显示风格</th><td>使用几何结构设置</td></tr>
      <tr><td class="gut"><svg width="10" height="10"><use href="#s-minus"/></svg></td><th class="sect" colspan="2">默认值</th></tr>
      <tr><td class="gut"></td><th>物理偏好</th><td>机械</td></tr>
      <tr><td class="gut"></td><th>单元的阶</th><td>程序控制</td></tr>
      <tr><td class="gut"></td><th><input type="checkbox" id="esize"><label for="esize">单元尺寸</label></th><td>默认</td></tr>
      </tbody>
    </table>
  </aside>

  <section class="d-flex flex-column flex-grow-1" style="min-width:0;margin-left:3px">
    <div class="gbar d-flex align-items-center flex-shrink-0 overflow-hidden">
      <div class="grip me-2 ms-0"></div>
      <button class="btn" aria-label="上一视图"><svg class="i14"><use href="#s-prev"/></svg></button>
      <button class="btn" aria-label="下一视图" disabled><svg class="i14"><use href="#s-next"/></svg></button>
      <div class="vr"></div>
      <button class="btn on" aria-label="着色与边"><svg class="i14"><use href="#s-cubes"/></svg></button>
      <button class="btn" aria-label="着色"><svg class="i14"><use href="#s-cubep"/></svg></button>
      <button class="btn" aria-label="切换"><svg class="i14"><use href="#s-swap"/></svg></button>
      <div class="vr"></div>
      <button class="btn off" aria-label="显示网格"><svg class="i14"><use href="#s-meshs"/></svg></button>
      <div class="vr"></div>
      <button class="btn" aria-label="旋转"><svg class="i14"><use href="#s-orbit"/></svg></button>
      <span class="caret orbitmenu"></span>
      <button class="btn" aria-label="平移"><svg class="i14"><use href="#s-pan"/></svg></button>
      <button class="btn" aria-label="缩放"><svg class="i14"><use href="#s-zdrag"/></svg></button>
      <button class="btn" aria-label="框选缩放"><svg class="i14"><use href="#s-zin"/></svg></button>
      <button class="btn" aria-label="适合窗口"><svg class="i14"><use href="#s-zfit"/></svg></button>
      <button class="btn" aria-label="缩放至所选"><svg class="i14"><use href="#s-zsel"/></svg></button>
      <div class="vr"></div>
      <span class="ms-1 me-2">选择</span>
      <button class="btn wordy"><svg class="i14"><use href="#s-arrow"/></svg>模式<span class="caret"></span></button>
      <button class="btn on ms-2" aria-label="单选"><svg class="i16"><use href="#s-f4"/></svg></button>
      <button class="btn" aria-label="顶点"><svg class="i14"><use href="#s-bv"/></svg></button>
      <button class="btn" aria-label="边"><svg class="i14"><use href="#s-be"/></svg></button>
      <button class="btn" aria-label="面"><svg class="i14"><use href="#s-bf"/></svg></button>
      <button class="btn" aria-label="体"><svg class="i14"><use href="#s-bb"/></svg></button>
      <button class="btn" aria-label="节点"><svg class="i14"><use href="#s-gn"/></svg></button>
      <button class="btn" aria-label="单元面"><svg class="i14"><use href="#s-gf"/></svg></button>
      <button class="btn" aria-label="单元"><svg class="i14"><use href="#s-ge"/></svg></button>
      <button class="btn" aria-label="坐标"><svg class="i16"><use href="#s-xyz"/></svg></button>
      <button class="btn" aria-label="数值"><svg class="i16"><use href="#s-100"/></svg></button>
      <button class="btn" aria-label="标签" disabled><svg class="i14"><use href="#s-abc"/></svg></button>
      <div class="vr"></div>
      <button class="btn wordy ms-1"><svg class="i14"><use href="#s-clip"/></svg>剪贴板<span class="caret"></span></button>
      <button class="btn ms-2 me-1 px-1">[ 空 ]</button>
      <div class="vr ms-0"></div>
      <button class="btn wordy apart ms-1"><svg class="i14"><use href="#s-ext"/></svg>扩展<span class="caret"></span></button>
      <button class="btn wordy apart"><svg class="i14"><use href="#s-pin"/></svg>选择依据<span class="caret"></span></button>
      <button class="btn wordy"><svg class="i14"><use href="#s-conv"/></svg>转换<span class="caret"></span></button>
      <span class="caret dark ms-2 mt-2"></span>
    </div>
    <div class="view flex-grow-1">
      <svg id="model" viewBox="290 170 1348 643" preserveAspectRatio="xMidYMid meet" role="img" aria-label="网格模型"></svg>
      <div class="wm">CSDN @分享是一种传递，一种快乐</div>
    </div>
  </section>
</main>

<script src="https://cdn.jsdelivr.net/npm/bootstrap@5.3.0/dist/js/bootstrap.bundle.min.js"></script>
<script>
// Rectangular frame of four beams, drawn as shaded faces with element edges.
const FACE = '#919191', SIDE = '#9b9b9b', DARK = '#434343';
const out = [];
const face = (pts, fill) => out.push(`<polygon points="${pts.map(p => p.join()).join(' ')}" fill="${fill}" stroke="#000"/>`);
const seg = (a, b, w = 1) => out.push(`<path d="M${a.join()}L${b.join()}" stroke="#000" stroke-width="${w}"/>`);
// n copies of segment a-b, each shifted by step
const rep = (a, b, step, n) => {
  for (let k = 0; k < n; k++) seg([a[0] + step[0] * k, a[1] + step[1] * k], [b[0] + step[0] * k, b[1] + step[1] * k]);
};
const H = [36.9, 1.18], V = [-1.5, 37];

// outer flanges
face([[842.5, 305.5], [1507, 326.5], [1506, 364], [841.5, 336]], FACE);
rep([879.4, 306.7], [878.4, 338], H, 17);
face([[799.5, 345.5], [828, 346.5], [821, 680.5], [784.5, 678.5]], FACE);
rep([797.5, 382.5], [826, 383.5], [-1.6, 37], 8);
face([[1509, 368.5], [1547, 369.7], [1533.3, 703.3], [1494.3, 701.7]], FACE);
rep([1507.5, 405.5], [1545.5, 406.7], [-1.55, 37], 8);
face([[825.3, 683], [1491, 705], [1489, 743.3], [824.7, 722]], FACE);
rep([862.3, 685], [861.3, 723], H, 17);

// inner flanges
face([[844.7, 350.5], [1492, 371.5], [1462.3, 409], [880.7, 390], [870, 639], [830.7, 668]], FACE);
face([[1492, 371.5], [1478.3, 689], [820, 668.3], [831.5, 638.5], [1450.7, 658.3], [1462, 409]], FACE);
out.push(`<path d="M845.500 352 880 352 880 389 869 660 832 667zM1464 373H1490L1477 687 1453 680z" fill="${FACE}"/>`);
seg([876.7, 351.5], [875.5, 388]); seg([881.7, 352], [880.7, 390]);
rep([914.7, 353.3], [913.3, 391], [36.87, 1.22], 16);
seg([1463.3, 371], [1462, 409]);
seg([842.7, 384.3], [881, 385.7]); seg([842.5, 388.3], [881, 390]);
rep([841, 421], [879, 422.7], [-1.6, 37], 6);
seg([831.5, 638.5], [870, 639.5]); seg([831.3, 643], [869, 644]);
seg([864.7, 639], [863.7, 668]); seg([869.5, 639], [868.5, 669]);
rep([901.7, 641], [900.3, 669.7], [36.9, 1.17], 15);
seg([1451, 658], [1449.7, 688]); seg([1455.3, 658.5], [1454.3, 688]);
seg([1462, 404.7], [1490, 405.5]); seg([1462, 408.7], [1490, 409.5]);
rep([1460.7, 441.5], [1488.7, 442.3], [-1.6, 37], 6);
seg([1450.7, 658.7], [1480, 659.5]); seg([1450.7, 663], [1479.5, 664]);
seg([1462, 409], [1450.7, 658.5]);

// webs of the side beams
face([[827.3, 339.5], [835.3, 343.3], [821.7, 668], [813.5, 673]], FACE);
face([[835.3, 343.3], [844.7, 350.5], [830.7, 668], [821.7, 668]], SIDE);
rep([826, 376.5], [834, 376.7], V, 8);
rep([834, 376.7], [843, 384], V, 8);
face([[1491.7, 360], [1500.7, 361.7], [1487.3, 693.3], [1478.3, 689]], FACE);
face([[1500.7, 361.7], [1509, 368.5], [1494.3, 701.5], [1487.3, 693.3]], SIDE);
rep([1491, 398.3], [1499.3, 398.7], V, 8);
rep([1499.3, 398.7], [1507.7, 405.3], V, 8);

// webs of the top and bottom beams
face([[836, 343], [1492.5, 364.7], [1491.7, 371.5], [844.7, 350.5]], DARK);
face([[832, 335.5], [1496.7, 356.7], [1492.5, 364.7], [832, 343]], FACE);
rep([869.3, 337], [869.1, 344], H, 17);
rep([869, 344.3], [877, 352], H, 17);
seg([1496.7, 356.7], [1508.5, 369]);
seg([827.3, 339.5], [836.5, 339.5]); seg([836.5, 339.5], [836.5, 343]);
face([[1478, 689], [1487.3, 693], [1494.3, 702], [1490, 705], [1482, 697.7]], '#b4b4b4');
face([[1484, 693], [1487.3, 693], [1494.3, 701.7], [1491, 701]], DARK);
face([[817.7, 668.3], [1481.7, 689.3], [1482, 697.7], [818, 676.3]], FACE);
face([[817, 676], [1482, 697.7], [1490, 705], [826, 683.3]], DARK);
rep([854.7, 669.7], [854.5, 677.3], [36.9, 1.17], 17);
rep([854.7, 677.5], [862.3, 685], [36.9, 1.17], 17);
seg([813.5, 673], [826, 683.3]);

// heavy silhouette edges
seg([880.7, 390.5], [1462.3, 409.5], 2); seg([880.7, 390], [870, 639], 2);
seg([1547, 369.7], [1533.3, 703.3], 2); seg([1507, 326.5], [1506, 364], 2);
seg([824.7, 722.3], [1489, 743.5], 2); seg([784.5, 679], [821, 680.7], 2);
seg([1491, 705], [1489, 743.3], 2); seg([1494.3, 702], [1533.3, 703.5], 2);
document.getElementById('model').innerHTML = `<g fill="none" shape-rendering="crispEdges">${out.join('')}</g>`;
</script>
</body>
</html>
